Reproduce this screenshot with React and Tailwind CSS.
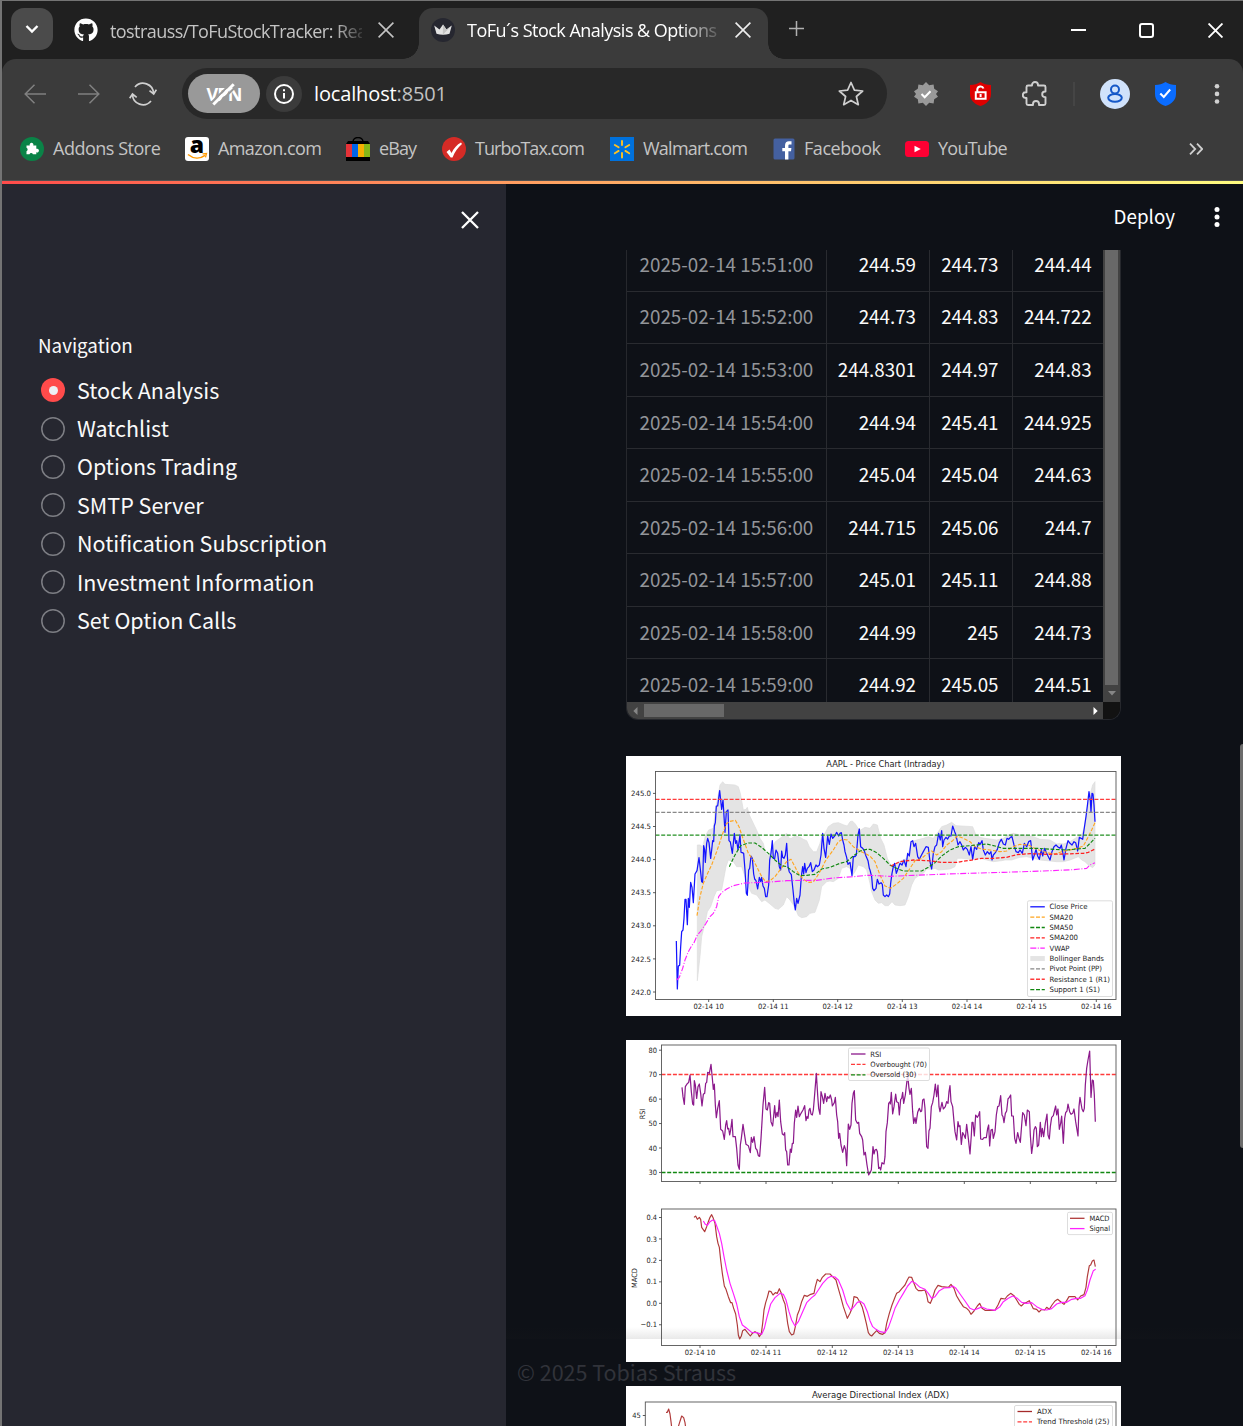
import React from "react";
import { FaGithub } from "react-icons/fa";

const UI = "font-['Open_Sans','Noto_Sans',sans-serif]";
const APP = "font-['Noto_Sans_CJK_SC','Noto_Sans',sans-serif]";

/* ---------- chart data: two halves, the second one starts 750 units later ---------- */
const series = (left, right = "") => {
  const parse = (s) => s.trim().split(/\s+/).filter(Boolean).map((p) => p.split(",").map(Number));
  return [...parse(left), ...parse(right).map(([x, y]) => [x + 750, y])].map((p) => p.join(",")).join(" ");
};

const CLOSE = series(
  "169,573 172,717 175,648 179,646 182,590 185,545 189,540 192,505 195,448 198,448 202,524 205,445 208,472 212,397 216,412 220,458 225,372 231,362 237,323 241,357 245,395 248,397 251,287 254,300 256,337 260,280 263,265 267,278 272,325 275,300 278,272 281,275 283,228 286,218 289,168 293,168 299,122 305,178 309,150 315,247 319,185 324,180 327,272 331,276 337,310 343,250 347,280 350,272 354,300 360,254 363,307 367,308 371,310 375,360 379,430 382,436 386,360 389,355 393,318 397,325 401,372 404,387 408,392 413,417 418,382 422,395 425,382 429,408 433,415 437,440 441,440 446,405 449,330 453,310 457,272 460,325 464,326 468,300 473,310 478,350 482,360 485,303 488,322 492,325 496,315 500,280 504,350 508,366 514,374 519,420 523,460 526,480 530,445 534,460 540,435 544,380 548,350 551,372 554,340 558,368 562,355 567,350 572,338 577,365 582,360 588,345 592,350 598,345 603,315 608,250 612,295 617,322 623,258 628,283 633,252 638,265 644,258 650,247 656,258 660,250 664,248 668,270 672,285 675,305 680,322 684,343 690,337 696,377 700,320 705,320 709,315 714,255 718,237 722,290 728,295 732,300 738,318 744,332 748,355",
  "0,360 5,380 8,415 12,422 18,415 22,388 27,402 33,398 37,403 40,435 45,440 50,435 55,440 59,432 62,400 66,370 70,350 74,340 79,370 84,357 90,340 96,345 102,330 108,350 113,310 118,318 123,275 128,272 132,290 137,280 143,320 148,328 153,318 160,305 168,290 175,292 180,335 185,357 190,310 195,290 200,285 206,250 211,270 215,242 218,290 222,270 228,262 233,267 238,258 243,258 248,228 254,245 258,255 264,285 270,275 275,285 280,300 286,292 292,298 298,315 303,290 308,328 314,290 320,298 326,278 331,282 336,272 340,300 346,315 352,305 358,312 363,305 366,330 370,315 376,308 382,298 388,278 394,268 400,282 406,285 411,265 416,268 421,262 426,260 432,285 438,305 445,308 450,300 457,310 463,280 470,290 476,275 482,272 488,330 494,312 498,298 503,318 508,328 514,298 518,318 524,295 528,305 534,318 540,330 546,305 552,290 558,285 565,292 570,295 574,285 578,305 582,330 588,295 594,272 600,280 606,285 612,275 617,278 623,303 628,262 633,265 638,268 642,240 648,200 653,160 657,125 661,150 663,187 666,130 669,132 672,165 675,215"
);
const BAND =
  series(
    "232,285 240,285 248,290 256,258 266,240 280,235 286,180 292,150 300,105 308,95 315,103 345,105 355,110 361,130 370,180 378,178 382,172 388,195 400,220 412,245 420,265 430,280 437,310 446,318 458,290 466,275 476,268 500,250 508,265 514,265 522,260 530,258 540,262 550,268 560,272 568,290 580,305 590,305 600,280 606,258 615,250 625,230 640,220 655,218 672,225 682,228 690,215 697,213 706,222 714,235 722,240 735,232",
    "0,235 10,222 22,225 32,265 42,285 52,325 62,345 70,345 85,335 100,330 110,325 118,300 126,275 140,270 160,265 175,260 190,265 205,245 215,230 230,225 245,217 258,227 275,228 308,230 318,255 330,262 345,265 380,270 400,265 415,255 430,250 450,255 470,255 490,260 510,268 540,270 560,282 570,280 580,282 600,275 620,262 635,255 642,235 650,190 660,135 668,105 675,95 675,345 668,353 655,345 645,335 635,330 625,320 600,330 580,335 560,335 540,333 510,330 490,325 470,320 450,322 440,325 425,330 405,330 395,332 370,335 350,330 330,325 315,325 300,328 275,325 262,325 255,350 240,357 205,360 195,355 185,358 170,357 160,370 145,378 135,385 125,405 115,440 105,465 90,467 75,465 66,455 55,467 45,467 35,458 25,460 15,450 5,425"
  ) +
  " 750,400 740,360 730,350 715,345 705,365 698,375 690,355 680,350 665,355 655,385 640,395 630,393 620,395 605,410 598,450 585,487 570,490 560,500 545,503 535,497 528,480 520,465 510,450 500,440 490,465 475,478 465,475 450,462 435,450 425,455 410,435 395,430 385,410 375,380 365,350 350,350 340,335 325,330 318,350 305,420 290,422 282,440 272,470 262,485 255,520 245,560 240,620 232,692";
const SMA20 = series(
  "231,497 240,440 250,400 262,372 275,345 290,305 305,260 318,222 330,214 346,211 357,230 367,260 375,282 385,310 400,330 415,360 425,380 437,395 450,392 465,380 480,360 500,335 513,328 522,345 535,370 550,388 565,397 580,396 592,378 604,358 615,335 625,320 640,300 655,275 667,268 682,270 700,290 720,303 740,313",
  "0,318 15,335 30,375 45,408 62,415 80,402 100,385 120,355 135,332 155,325 170,312 185,303 200,315 215,305 230,285 248,272 262,258 280,265 300,275 315,290 335,297 360,300 390,305 410,303 430,290 450,283 475,285 500,298 530,308 555,312 575,305 600,300 620,295 640,288 655,260 665,240 675,218"
);
const SMA50 = series(
  "328,350 345,315 362,287 385,279 405,279 425,292 445,310 465,330 485,347 500,350 520,365 540,377 560,376 585,373 605,357 630,352 660,340 680,335 700,318 720,303 740,298",
  "0,298 20,308 40,325 60,345 80,355 100,363 155,363 175,352 195,338 215,318 240,300 265,290 300,287 350,282 375,288 400,295 450,295 500,295 550,298 590,300 620,297 645,295 660,280 675,265"
);
const SMA200 = series("", "62,348 90,335 130,330 185,333 215,337 260,337 300,331 335,325 370,325 410,322 440,314 480,311 530,313 580,312 640,310 655,307 675,297");
const VWAP = series(
  "170,690 178,682 188,655 195,630 205,605 215,587 222,578 232,555 245,540 258,520 270,500 280,490 290,470 296,440 305,428 320,417 340,407 375,399 440,397 500,392 550,391 590,391 640,384 700,380 740,376",
  "0,376 60,379 130,376 260,371 400,367 520,363 610,359 650,355 660,345 675,338"
);
const RSI = series(
  "186,157 189,185 193,208 196,155 201,147 206,142 210,120 214,170 218,207 221,210 223,137 226,150 230,190 234,155 238,147 242,175 246,213 250,178 254,175 257,145 260,142 263,112 268,115 273,88 277,130 280,163 283,147 286,210 289,248 293,220 298,197 302,283 308,288 313,313 317,270 320,257 323,282 326,280 329,300 332,285 336,253 339,305 346,305 350,340 354,390 358,403 361,330 364,310 369,268 373,295 378,328 385,332 391,353 394,307 398,322 402,305 407,340 411,345 415,362 419,364 423,310 429,210 434,157 438,222 442,225 446,203 449,205 453,260 458,273 464,212 467,248 471,232 474,245 478,195 482,260 487,297 491,300 494,293 497,345 500,350 503,390 507,390 511,342 514,352 517,325 520,325 523,265 527,225 530,247 534,213 538,245 543,235 549,225 554,212 558,257 561,245 564,250 567,225 570,220 573,237 577,240 580,225 583,190 589,115 593,180 596,220 600,238 603,170 607,185 611,205 615,175 620,200 623,185 627,190 631,180 635,195 637,213 643,203 646,187 650,240 653,260 656,310 659,295 663,330 668,352 673,332 677,345 680,392 685,267 689,283 693,270 696,205 700,175 703,167 707,255 712,265 716,262 719,295 725,305 728,315 732,360 736,352 741,390 746,420",
  "0,413 4,405 9,335 12,357 15,345 19,343 22,350 26,400 29,397 32,405 36,383 42,387 45,365 48,290 52,263 56,205 60,200 61,207 64,172 68,237 72,215 77,177 80,200 85,203 88,240 92,193 95,190 98,172 101,205 106,180 110,145 113,120 117,160 120,178 124,160 128,230 131,265 135,248 138,265 143,232 148,220 152,230 155,228 158,195 162,192 165,220 168,290 170,335 174,340 177,287 180,280 184,215 188,203 192,180 196,147 200,185 204,150 207,215 210,230 216,202 220,222 226,215 230,200 234,205 237,170 240,152 243,200 248,215 252,260 255,290 260,315 264,260 267,275 270,272 274,328 278,293 282,300 286,310 290,268 295,310 300,357 304,300 306,262 309,262 313,303 317,240 322,247 326,240 329,230 332,312 338,313 342,308 349,308 353,280 356,270 359,333 363,285 367,283 370,310 375,290 379,240 383,215 387,213 392,182 396,240 399,245 402,263 406,235 410,228 414,192 418,187 422,180 425,243 430,243 434,310 438,325 443,293 447,310 451,322 455,270 458,233 463,240 468,272 472,225 478,230 481,300 485,355 489,325 492,285 496,275 499,280 502,335 506,330 511,262 514,305 517,280 521,305 526,265 531,237 534,300 538,312 541,275 545,247 550,242 554,225 557,213 560,240 564,222 568,283 572,265 575,243 580,325 584,250 587,233 591,228 594,207 599,230 603,238 608,235 612,222 617,260 624,303 627,215 630,187 636,222 640,230 643,220 646,150 650,100 654,75 659,48 663,187 667,135 670,137 673,180 676,260"
);
const MACD = series(
  "222,52 227,48 232,58 238,52 242,58 245,82 254,95 260,80 265,65 270,52 275,44 280,55 285,70 290,110 294,130 298,142 302,180 307,220 313,258 318,268 325,290 332,308 336,308 341,325 347,342 352,375 355,405 359,417 364,408 368,392 375,388 382,397 391,408 397,400 405,395 413,400 418,410 424,400 428,370 432,330 437,308 442,292 447,273 453,275 459,285 466,278 472,280 478,266 484,280 490,300 495,312 499,340 503,370 508,395 515,405 521,402 526,380 532,345 538,330 545,305 553,286 562,289 572,283 582,280 586,260 592,238 600,245 607,232 617,222 630,222 640,232 648,240 654,262 662,290 670,320 677,340 682,355 690,340 695,328 699,310 702,290 712,293 720,307 727,322 733,345 739,370 745,398",
  "0,405 5,408 12,400 20,392 28,400 38,403 45,398 50,370 58,340 66,315 75,292 80,280 88,275 96,265 105,255 112,240 117,231 125,232 130,245 138,265 145,272 155,272 165,270 170,285 174,305 181,310 188,293 195,270 204,256 215,260 235,262 243,253 252,265 260,288 270,305 280,320 290,325 297,332 303,343 312,333 322,318 329,310 336,325 345,331 375,331 384,315 393,295 405,297 412,288 422,280 432,287 440,300 448,313 454,318 462,310 470,307 478,302 486,318 490,326 500,328 507,336 515,328 524,330 530,322 538,328 546,315 555,303 563,298 572,305 582,313 590,302 597,290 615,290 623,300 632,288 642,284 648,262 652,230 658,197 662,195 667,183 672,180 676,200"
);
const SIGNAL = series(
  "250,63 256,73 262,76 270,65 278,60 284,62 290,78 298,100 305,130 312,170 320,210 330,250 340,280 350,312 358,350 367,375 380,385 395,397 410,398 425,403 433,385 440,355 452,312 465,293 480,280 490,283 498,300 507,335 515,360 525,378 535,365 548,335 560,308 575,293 585,285 595,270 608,250 622,235 633,229 645,231 655,240 668,270 680,310 692,331 702,320 712,307 722,304 732,312 742,335",
  "0,362 8,380 18,388 30,395 45,398 55,383 65,355 75,325 88,300 100,280 113,258 125,244 137,250 150,262 165,268 175,280 185,295 195,290 208,272 222,264 238,263 248,258 258,265 270,282 285,303 300,325 312,330 325,325 335,321 350,327 375,331 390,320 400,305 415,295 428,288 442,295 455,307 470,310 485,308 500,320 515,328 530,330 545,326 560,312 575,307 590,307 605,298 620,295 632,295 645,287 652,270 660,240 670,212 677,208"
);
const ADX = "138,637 142,637 146,627 150,642 153,665 156,690 172,690 178,670 185,648 191,653 195,668 198,690";

function Line({ points, color, dash, w = 3.4 }) {
  return <polyline points={points} fill="none" stroke={color} strokeWidth={w} strokeDasharray={dash} strokeLinejoin="round" />;
}

function T({ x, y, children, w, size = 7.3, anchor = "start", rotate }) {
  return (
    <text
      x={x}
      y={y}
      fontSize={size}
      textAnchor={anchor}
      fill="#1c1c1c"
      textLength={w}
      lengthAdjust="spacingAndGlyphs"
      transform={rotate ? `rotate(-90 ${x} ${y})` : undefined}
    >
      {children}
    </text>
  );
}

function Frame({ x, y, h }) {
  return <rect x={x} y={y} width={1116 - x} height={h} fill="none" stroke="#555" strokeWidth="0.9" />;
}

function XTicks({ xs, y, labels = true }) {
  return xs.map((x, i) => (
    <g key={i}>
      <path d={`M${x} ${y}v2.5`} stroke="#333" strokeWidth="0.8" />
      {labels && <T x={x} y={y + 9.8} w={30.5} anchor="middle">{`02-14 ${10 + i}`}</T>}
    </g>
  ));
}

function YTicks({ items, x, w }) {
  return items.map(([label, y]) => (
    <g key={label}>
      <path d={`M${x} ${y}h-2.5`} stroke="#333" strokeWidth="0.8" />
      <T x={x - 4.5} y={y + 2.6} w={label.startsWith("−") ? w + 6 : w} anchor="end">{label}</T>
    </g>
  ));
}

function Legend({ x, y, w, h, items, lx, tx, dy }) {
  return (
    <g>
      <rect x={x} y={y} width={w} height={h} rx="1.5" fill="#fff" fillOpacity="0.8" stroke="#d4d4d4" strokeWidth="0.8" />
      {items.map(([label, color, dash, tw], i) => {
        const ly = y + 6 + i * dy;
        return (
          <g key={label}>
            {dash === "fill" ? (
              <rect x={lx} y={ly - 2.5} width="14.500" height="5" fill="#e4e4e4" />
            ) : (
              <path d={`M${lx} ${ly}h14.5`} stroke={color} strokeWidth="1.3" strokeDasharray={dash} />
            )}
            <T x={tx} y={ly + 2.5} w={tw}>{label}</T>
          </g>
        );
      })}
    </g>
  );
}

const D = "4 1.7";
const X1 = [708.7, 773.3, 837.7, 902.3, 967, 1031.7, 1096.3];
const X2 = [700, 766, 832.3, 898.3, 964.3, 1030.3, 1096.3];

function PriceChart() {
  return (
    <svg viewBox="626 756 495 260" className="block h-[260px] w-[495px] shrink-0 bg-white font-['DejaVu_Sans',sans-serif]">
      <T x={885.5} y={767} w={118.5} size={8.6} anchor="middle">AAPL - Price Chart (Intraday)</T>
      <g transform="translate(620 750) scale(0.33333)">
        <polygon points={BAND} fill="#e4e4e4" stroke="#dcdcdc" strokeWidth="2" />
        <Line points={CLOSE} color="#1414ff" w={3.7} />
        <Line points={SMA20} color="#ffa51f" dash="11 5" />
        <Line points={SMA50} color="#118811" dash="11 5" />
        <Line points={SMA200} color="#ff2020" dash="11 5" w={3.8} />
        <Line points={VWAP} color="#ff22ff" dash="18 5 3 5" />
      </g>
      <path d="M655.5 799.3H1116" stroke="#ff3b3b" strokeWidth="1.3" strokeDasharray={D} />
      <path d="M655.5 812.4H1116" stroke="#888" strokeWidth="1.3" strokeDasharray={D} />
      <path d="M655.5 835.2H1116" stroke="#229022" strokeWidth="1.3" strokeDasharray={D} />
      <Frame x={655.5} y={771.5} h={228} />
      <YTicks x={655.5} w={20} items={["245.0", "244.5", "244.0", "243.5", "243.0", "242.5", "242.0"].map((l, i) => [l, 793.4 + i * 33.1])} />
      <XTicks xs={X1} y={999.5} />
      <Legend
        x={1027.5} y={900.8} w={85} h={95.7} lx={1030.3} tx={1049.5} dy={10.35}
        items={[
          ["Close Price", "#1414ff", undefined, 38],
          ["SMA20", "#ffa51f", D, 23.5],
          ["SMA50", "#118811", D, 23.5],
          ["SMA200", "#ff2020", D, 28.5],
          ["VWAP", "#ff22ff", "6 1.5 1 1.5", 20],
          ["Bollinger Bands", "", "fill", 54.5],
          ["Pivot Point (PP)", "#888", D, 52.5],
          ["Resistance 1 (R1)", "#ff3b3b", D, 60.5],
          ["Support 1 (S1)", "#118811", D, 50.5],
        ]}
      />
    </svg>
  );
}

function OscillatorChart() {
  return (
    <svg viewBox="626 1040 495 322" className="block h-[322px] w-[495px] shrink-0 bg-white font-['DejaVu_Sans',sans-serif]">
      <path d="M661.5 1074.5H1116" stroke="#ff3b3b" strokeWidth="1.3" strokeDasharray={D} />
      <path d="M661.5 1172.5H1116" stroke="#118811" strokeWidth="1.3" strokeDasharray={D} />
      <g transform="translate(620 1035) scale(0.33333)">
        <Line points={RSI} color="#8c1a8c" w={3.7} />
      </g>
      <Frame x={661.5} y={1045} h={136.5} />
      <YTicks x={661.5} w={8.5} items={["80", "70", "60", "50", "40", "30"].map((l, i) => [l, 1050.2 + i * 24.45])} />
      <XTicks xs={X2} y={1181.5} labels={false} />
      <T x={644.5} y={1114} w={10.5} anchor="middle" rotate>RSI</T>
      <Legend
        x={848.5} y={1048} w={81} h={32.5} lx={851} tx={870.3} dy={10.4}
        items={[
          ["RSI", "#8c1a8c", undefined, 11],
          ["Overbought (70)", "#ff3b3b", D, 56.5],
          ["Oversold (30)", "#118811", D, 46],
        ]}
      />
      <g transform="translate(620 1200) scale(0.33333)">
        <Line points={MACD} color="#b03a3a" w={3.5} />
        <Line points={SIGNAL} color="#ff22ff" w={3.5} />
      </g>
      <Frame x={661.5} y={1209} h={136.5} />
      <YTicks x={661.5} w={10.5} items={["0.4", "0.3", "0.2", "0.1", "0.0", "−0.1"].map((l, i) => [l, 1217.5 + i * 21.45])} />
      <XTicks xs={X2} y={1345.5} />
      <T x={636.5} y={1278} w={20} anchor="middle" rotate>MACD</T>
      <Legend
        x={1067.5} y={1212.3} w={45} h={22.3} lx={1070} tx={1089.5} dy={10.3}
        items={[["MACD", "#b03a3a", undefined, 20], ["Signal", "#ff22ff", undefined, 20.5]]}
      />
    </svg>
  );
}

function AdxChart() {
  return (
    <svg viewBox="626 1386 495 40" className="block h-10 w-[495px] shrink-0 bg-white font-['DejaVu_Sans',sans-serif]">
      <T x={880.5} y={1397.6} w={137} size={8.6} anchor="middle">Average Directional Index (ADX)</T>
      <g transform="translate(620 1200) scale(0.33333)">
        <Line points={ADX} color="#b03a3a" w={3.5} />
      </g>
      <Frame x={645.3} y={1402} h={136} />
      <YTicks x={645.3} w={8.5} items={[["45", 1415.5]]} />
      <Legend
        x={1014.5} y={1405.5} w={98} h={40} lx={1017.5} tx={1037} dy={10.3}
        items={[["ADX", "#a52a2a", undefined, 15], ["Trend Threshold (25)", "#ff3b3b", D, 72.5]]}
      />
    </svg>
  );
}

/* ---------- browser chrome ---------- */
function Cross({ size = 16, color = "#d6d6d6", w = 1.6 }) {
  return (
    <svg width={size} height={size} viewBox="0 0 16 16" className="shrink-0">
      <path d="M.6.6l14.8 14.8M15.4.6L.6 15.4" stroke={color} strokeWidth={w} />
    </svg>
  );
}

function TabStrip() {
  return (
    <div className="flex h-[58px] shrink-0 bg-[#202020] pl-[9px]">
      <div className="mt-[7px] grid h-[42px] w-[42px] shrink-0 place-items-center rounded-[13px] bg-[#4b4b4b]">
        <svg width="14" height="10" viewBox="0 0 14 10"><path d="M1.5 2L7 7.5 12.5 2" fill="none" stroke="#fff" strokeWidth="2.4" /></svg>
      </div>
      <div className="flex h-[58px] w-[366px] shrink-0 items-center pl-[21px]">
        <FaGithub className="mt-[-1px] shrink-0 text-white" size={24} />
        <div className="ml-3 mt-0.5 w-[252px] whitespace-nowrap text-[18px] tracking-[-0.57px] text-[#c4c4c4] [mask-image:linear-gradient(to_right,#000_225px,transparent_258px)]">
          tostrauss/ToFuStockTracker: Rea
        </div>
        <div className="ml-4 flex"><Cross color="#c4c4c4" /></div>
      </div>
      <div className="relative mt-[7px] flex h-[51px] w-[349px] shrink-0 items-center rounded-t-[14px] bg-[#3b3b3b] pl-3">
        <span className="absolute -left-4 bottom-0 h-4 w-4 bg-[radial-gradient(circle_at_0_0,transparent_15.5px,#3b3b3b_16px)]" />
        <span className="absolute -right-4 bottom-0 h-4 w-4 bg-[radial-gradient(circle_at_100%_0,transparent_15.5px,#3b3b3b_16px)]" />
        <svg width="24" height="24" viewBox="0 0 24 24" className="-mt-2 shrink-0">
          <circle cx="12" cy="12" r="12" fill="#262730" />
          <path d="M3.2 7.5l5.3 4L12 6.5l3.500 5 5.300-4-2.300 8.300c-4 1.400-9 1.400-13 0z" fill="#e3e3e3" />
          <path d="M12 6.500l3.500 5 5.300-4-9 9.300z" fill="#c4c4c4" />
        </svg>
        <div className="-mt-1.5 ml-3 w-[250px] whitespace-nowrap text-[18px] tracking-[-0.52px] text-white [mask-image:linear-gradient(to_right,#000_212px,transparent_258px)]">
          ToFu´s Stock Analysis &amp; Options
        </div>
        <div className="-mt-2 ml-[18px] flex"><Cross color="#eee" /></div>
      </div>
      <div className="ml-[21px] mt-[20px]">
        <svg width="15" height="15" viewBox="0 0 15 15"><path d="M7.500 0v15M0 7.500h15" stroke="#b0b0b0" strokeWidth="1.500" /></svg>
      </div>
      <div className="ml-auto mr-5 flex h-[58px] items-center gap-[53px]">
        <span className="h-0.5 w-[15px] bg-white" />
        <span className="h-[15px] w-[15px] rounded-[3px] border-2 border-white" />
        <span className="ml-px flex"><Cross size={15} color="#fff" w={2} /></span>
      </div>
    </div>
  );
}

function Toolbar() {
  return (
    <div className="flex h-[69px] shrink-0 items-center bg-[#3b3b3b] pl-1.5">
      <div className="grid w-[54px] place-items-center">
        <svg width="22" height="20" viewBox="0 0 22 20" fill="none" stroke="#808080" strokeWidth="1.500"><path d="M22 10H1.500M10.500 .7L1.200 10l9.300 9.300" /></svg>
      </div>
      <div className="grid w-[54px] place-items-center">
        <svg width="22" height="20" viewBox="0 0 22 20" fill="none" stroke="#808080" strokeWidth="1.500"><path d="M0 10h20.500M11.500 .7l9.300 9.300-9.300 9.300" /></svg>
      </div>
      <div className="grid w-[54px] place-items-center">
        <svg width="28" height="24" viewBox="0 0 28 24" fill="none" stroke="#cfcfcf" strokeWidth="1.700">
          <path d="M6 5a10.500 10.500 0 0 1 18.500 6.500M22 19a10.500 10.500 0 0 1-18.500-6.500M20.500 8.700l4.200 3.300 2.700-4.300M.7 16.300L3.500 12l4.200 3.300" />
        </svg>
      </div>
      <div className="ml-3 flex h-[51px] w-[705px] shrink-0 items-center rounded-full bg-[#282828] pl-1.5">
        <div className="relative grid h-[39px] w-[72px] place-items-center rounded-full bg-[#999]">
          <span className="text-[18px] font-bold leading-none tracking-[-0.8px] text-white">VPN</span>
          <svg width="30" height="26" viewBox="0 0 30 26" className="absolute left-[21px] top-[7px]">
            <path d="M6.500 25.500L27 5.500" stroke="#999" strokeWidth="2" />
            <path d="M2.500 21.500L23 1.500" stroke="#999" strokeWidth="2" />
            <path d="M4.300 23.500L24.700 3.200" stroke="#fff" strokeWidth="3" />
          </svg>
        </div>
        <div className="ml-1.5 grid h-9 w-9 place-items-center rounded-full bg-[#3b3b3b]">
          <svg width="20" height="20" viewBox="0 0 20 20" fill="none" stroke="#fff" strokeWidth="2"><circle cx="10" cy="10" r="9" /><path d="M10 9v5.500M10 5.300v2" /></svg>
        </div>
        <div className="ml-3 text-[20px] tracking-[-0.14px] text-[#c2c2c2]"><span className="text-white">localhost</span>:8501</div>
        <svg width="26" height="25" viewBox="0 0 26 25" className="ml-auto mr-[23px]">
          <path d="M13 1.500l3.400 7.700 8.300.8-6.300 5.500 1.900 8.200L13 19.400l-7.300 4.300 1.900-8.200L1.300 10l8.300-.8z" fill="none" stroke="#cfcfcf" strokeWidth="1.700" strokeLinejoin="round" />
        </svg>
      </div>
      <div className="ml-[27px] grid w-6 place-items-center">
        <svg width="24" height="24" viewBox="0 0 24 24">
          <path d="M12 0l3.200 3.200 4.400-.8.600 4.300L24 9.200 22 12l2 2.800-3.800 2.500-.600 4.300-4.400-.8L12 24l-3.200-3.200-4.400.8-.600-4.300L0 14.800 2 12 0 9.200l3.800-2.500.600-4.300 4.400.8z" fill="#999" />
          <path d="M7.500 12l3.200 3.200 5.800-6" fill="none" stroke="#fff" strokeWidth="2" />
        </svg>
      </div>
      <svg width="21" height="24" viewBox="0 0 21 24" className="ml-[32px]">
        <path d="M10.500 0C7.500 2 4 3 0 3v9c0 6 4.500 10 10.500 12C16.500 22 21 18 21 12V3c-4 0-7.500-1-10.500-3z" fill="#df0000" />
        <path d="M5.800 10.300h9.800v6.500H5.800zM7.300 10V7.500a3.200 3.200 0 0 1 6.200-1" fill="none" stroke="#fff" strokeWidth="2" />
        <path d="M10.600 12v3" stroke="#fff" strokeWidth="2" />
      </svg>
      <svg width="25" height="25" viewBox="0 0 25 25" className="ml-[31px]" fill="none" stroke="#cfcfcf" strokeWidth="1.900" strokeLinejoin="round">
        <path d="M6 4.500h4V4a3 3 0 0 1 6 0v.500h6a1.500 1.500 0 0 1 1.500 1.500v4.500H23a2.800 2.800 0 0 0 0 5.600h.500v6.400a1.500 1.500 0 0 1-1.500 1.500h-5V23a3 3 0 0 0-6 0v1H6A1.500 1.500 0 0 1 4.500 22.500V17h-.8a2.900 2.900 0 0 1 0-5.800h.8V6A1.500 1.500 0 0 1 6 4.500z" />
      </svg>
      <span className="ml-[26px] h-6 w-[2px] bg-[#454545]" />
      <div className="ml-[25px] grid h-[30px] w-[30px] place-items-center rounded-full bg-[#d0e2fb]">
        <svg width="18" height="19" viewBox="0 0 18 19" fill="none" stroke="#1558c8" strokeWidth="2"><circle cx="9" cy="5.500" r="4" /><ellipse cx="9" cy="13.800" rx="6.800" ry="3.900" /></svg>
      </div>
      <svg width="21" height="24" viewBox="0 0 21 24" className="ml-[25px]">
        <path d="M10.500 0C7.500 2 4 3 0 3v9c0 6 4.500 10 10.500 12C16.500 22 21 18 21 12V3c-4 0-7.500-1-10.500-3z" fill="#0a6cff" />
        <path d="M5.300 11.500l3.500 3.500 6.400-7.500" fill="none" stroke="#fff" strokeWidth="2" />
      </svg>
      <svg width="6" height="20" viewBox="0 0 6 20" className="ml-[38px]" fill="#d0d0d0"><circle cx="3" cy="2.300" r="2.300" /><circle cx="3" cy="9.900" r="2.300" /><circle cx="3" cy="17.500" r="2.300" /></svg>
    </div>
  );
}

function Bookmark({ icon, label, className }) {
  return (
    <div className={`flex shrink-0 items-center ${className}`}>
      <span className="shrink-0">{icon}</span>
      <span className="ml-[9px] whitespace-nowrap">{label}</span>
    </div>
  );
}

const S24 = { width: 24, height: 24, viewBox: "0 0 24 24" };

function Bookmarks() {
  return (
    <div className="flex h-[52px] shrink-0 items-center bg-[#3b3b3b] pb-[11px] pl-[18px] text-[18px] text-[#c4c4c4]">
      <Bookmark className="w-[165px] tracking-[-0.48px]" label="Addons Store" icon={
        <svg {...S24}>
          <circle cx="12" cy="12" r="12" fill="#0a8347" />
          <path d="M6.500 8.500h3.300a1.900 1.900 0 1 1 3.500 0h3v3.300a1.900 1.900 0 1 1 0 3.500v2h-3.400a1.800 1.800 0 0 0-3.400 0h-3v-3a1.900 1.900 0 0 0 0-3.500z" fill="#fff" />
        </svg>
      } />
      <Bookmark className="w-[161px] tracking-[-0.6px]" label="Amazon.com" icon={
        <svg {...S24} className="overflow-visible"><rect width="24" height="24" rx="3" fill="#fff" /><text x="12" y="15.500" textAnchor="middle" fontSize="23" fontWeight="800" fill="#000" fontFamily="Open Sans" letterSpacing="0">a</text><path d="M3 17.500c5.500 4.500 12 4.500 17 .800" fill="none" stroke="#f90" strokeWidth="1.600" /><path d="M17.500 16.800l4-.300-1 3.800" fill="none" stroke="#f90" strokeWidth="1.300" /></svg>
      } />
      <Bookmark className="w-[96px] tracking-[-0.9px]" label="eBay" icon={
        <svg {...S24}><path d="M7 5c0-6 10-6 10 0" fill="none" stroke="#000" strokeWidth="1.500" /><path d="M2 4h20l2 3H0zM0 20h24v4H0z" fill="#000" /><path d="M0 7h6v13H0z" fill="#e53238" /><path d="M6 7h6v13H6z" fill="#0064e8" /><path d="M12 7h6v13h-6z" fill="#f5af02" /><path d="M18 7h6v13h-6z" fill="#86b817" /></svg>
      } />
      <Bookmark className="w-[168px] tracking-[-0.95px]" label="TurboTax.com" icon={
        <svg {...S24}><circle cx="12" cy="12" r="12" fill="#d52b26" /><path d="M4.500 15l3-2.500 2 3.500C12 11 15 7.500 19 5.500l1 1.500c-4 3.500-7 7.500-9.500 13.500H8.700z" fill="#fff" /></svg>
      } />
      <Bookmark className="w-[163px] tracking-[-0.75px]" label="Walmart.com" icon={
        <svg {...S24}><path d="M0 0h24v24H0z" fill="#0071dc" /><path d="M12 4v4M12 16v4.500M4.800 8l3.800 2.200M15.400 13.900l3.800 2.300M4.800 16.200l3.800-2.300M15.400 10.200L19.200 8" stroke="#ffc220" strokeWidth="1.900" strokeLinecap="round" /></svg>
      } />
      <Bookmark className="w-[132px] tracking-[-0.45px]" label="Facebook" icon={
        <svg width="22" height="22" viewBox="0 0 22 22"><rect x=".5" y=".5" width="21" height="21" rx="1.500" fill="#4460a0" /><path d="M12 21.500v-8.200H9.300V10H12V7.700C12 4.800 13.500 3.300 16 3.300h2.500v3.200h-1.700c-1.200 0-1.400.5-1.400 1.400V10h3l-.4 3.300h-2.600v8.200z" fill="#fff" /></svg>
      } />
      <Bookmark className="tracking-[-0.75px]" label="YouTube" icon={
        <svg {...S24}><rect y="4" width="24" height="16" rx="3.500" fill="#ff0033" /><path d="M9.500 8.800v6.400L15.800 12z" fill="#fff" /></svg>
      } />
      <svg width="14" height="12" viewBox="0 0 14 12" className="ml-auto mr-[40px]" fill="none" stroke="#cfcfcf" strokeWidth="1.800"><path d="M1 .7L6.200 6 1 11.300M8 .7L13.200 6 8 11.300" /></svg>
    </div>
  );
}

/* ---------- app ---------- */
const NAV = ["Stock Analysis", "Watchlist", "Options Trading", "SMTP Server", "Notification Subscription", "Investment Information", "Set Option Calls"];

function Sidebar() {
  return (
    <aside className="w-[504px] shrink-0 bg-[#262730] pl-9">
      <div className="flex justify-end pr-[27px] pt-[27px]">
        <svg width="18" height="18" viewBox="0 0 18 18"><path d="M1 1l16 16M17 1L1 17" stroke="#fff" strokeWidth="2.300" /></svg>
      </div>
      <div className="mt-[102px] h-7 text-[18.8px] leading-7 text-[#fafafa]">Navigation</div>
      <div className="mt-3 pl-[3px]">
        {NAV.map((n, i) => (
          <div key={n} className="flex h-[38.4px] items-center">
            {i === 0 ? (
              <span className="grid h-6 w-6 place-items-center rounded-full bg-[#ff4b4b]"><span className="h-[9px] w-[9px] rounded-full bg-[#eef0f4]" /></span>
            ) : (
              <svg width="24" height="24" viewBox="0 0 24 24"><circle cx="12" cy="12" r="11.200" fill="none" stroke="#7d7e84" strokeWidth="1.500" /></svg>
            )}
            <span className="mb-px ml-3 whitespace-nowrap text-[21.5px] leading-8 text-[#fafafa]">{n}</span>
          </div>
        ))}
      </div>
    </aside>
  );
}

const ROWS = [
  ["51", "244.59", "244.73", "244.44"],
  ["52", "244.73", "244.83", "244.722"],
  ["53", "244.8301", "244.97", "244.83"],
  ["54", "244.94", "245.41", "244.925"],
  ["55", "245.04", "245.04", "244.63"],
  ["56", "244.715", "245.06", "244.7"],
  ["57", "245.01", "245.11", "244.88"],
  ["58", "244.99", "245", "244.73"],
  ["59", "244.92", "245.05", "244.51"],
];

function DataTable() {
  return (
    <div className="h-[470px] w-[495px] shrink-0 overflow-hidden rounded-b-[12px] border border-t-0 border-[#26282d]">
      <div className="flex h-[452px]">
        <div className="h-[452px] w-[476px] shrink-0 overflow-hidden">
          <div className="-mt-[11px] text-[18.8px] leading-none text-[#fafafa]">
            {ROWS.map(([m, a, b, c]) => (
              <div key={m} className="flex h-[52.56px] border-b border-[#292b30]">
                <div className="flex w-[199.5px] items-center border-r border-[#292b30] pb-px pl-[12.6px] text-[#93959a]">2025-02-14 15:{m}:00</div>
                <div className="flex w-[103.500px] items-center justify-end border-r border-[#292b30] pb-px pr-[13px]">{a}</div>
                <div className="flex w-[82.500px] items-center justify-end border-r border-[#292b30] pb-px pr-[13px]">{b}</div>
                <div className="flex w-[90px] items-center justify-end pb-px pr-[10.800px]">{c}</div>
              </div>
            ))}
          </div>
        </div>
        <div className="flex w-[17px] flex-col items-center bg-[#424242]">
          <div className="h-[435px] w-[13px] bg-[#686868]" />
          <svg width="8" height="5" viewBox="0 0 8 5" className="mt-1.5"><path d="M0 0h8L4 4.500z" fill="#868686" /></svg>
        </div>
      </div>
      <div className="flex h-[17px]">
        <div className="flex w-[476px] items-center bg-[#424242] pl-1.5 pr-[5px]">
          <svg width="5" height="8" viewBox="0 0 5 8"><path d="M4.500 0v8L.3 4z" fill="#868686" /></svg>
          <span className="ml-1.5 h-[13px] w-[80px] bg-[#686868]" />
          <svg width="5" height="8" viewBox="0 0 5 8" className="ml-auto"><path d="M.5 0v8l4.200-4z" fill="#fff" /></svg>
        </div>
        <div className="w-[17px] bg-[#121212]" />
      </div>
    </div>
  );
}

export default function App() {
  return (
    <div className={`relative flex h-[1426px] w-[1243px] flex-col overflow-hidden border-l-2 border-t border-[#747474] bg-[#0e1117] ${UI}`}>
      <TabStrip />
      <div className="shrink-0 bg-[#202020]">
        <div className="overflow-hidden rounded-t-[14px]">
          <Toolbar />
          <Bookmarks />
        </div>
      </div>
      <div className="h-px shrink-0 bg-[#515151]" />
      <div className="h-[3px] shrink-0 bg-gradient-to-r from-[#ff4b4b] to-[#fffd80]" />
      <div className={`flex min-h-0 flex-1 ${APP}`}>
        <Sidebar />
        <main className="relative flex min-w-0 flex-1 flex-col overflow-hidden">
          <div className="flex h-[66px] shrink-0 items-center justify-end pr-[23px]">
            <span className="mb-0.5 text-[18.8px] text-white">Deploy</span>
            <svg width="6" height="20" viewBox="0 0 6 20" className="ml-[39px]" fill="#fff"><circle cx="3" cy="2.500" r="2.500" /><circle cx="3" cy="10" r="2.500" /><circle cx="3" cy="17.500" r="2.500" /></svg>
          </div>
          <div className="flex flex-col pl-[120px]">
            <DataTable />
            <div className="mt-[36px] flex flex-col gap-6">
              <PriceChart />
              <OscillatorChart />
              <AdxChart />
            </div>
          </div>
          <div className="absolute left-0 top-[1143px] h-[12px] w-full bg-gradient-to-b from-[#222]/0 to-[#222]/10" />
          <div className="absolute left-[11px] top-[1172px] text-[21.5px] leading-8 text-[#31333a]">© 2025 Tobias Strauss</div>
          <div className="absolute right-0 top-[560px] h-[404px] w-[3px] rounded-l bg-[#6b6b6b]" />
        </main>
      </div>
    </div>
  );
}
